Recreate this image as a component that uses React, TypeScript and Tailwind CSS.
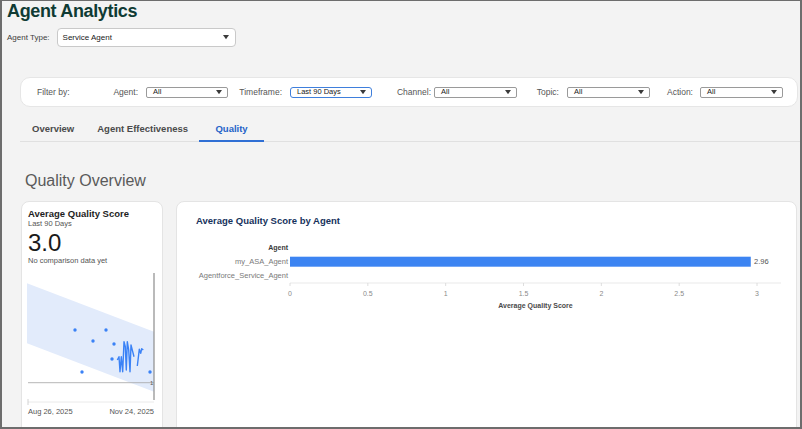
import React from 'react';

const FONT = { fontFamily: '"Liberation Sans", Arial, sans-serif' };

const Caret = ({ size = 5 }: { size?: number }) => (
  <svg width={size} height={size * 0.7} viewBox="0 0 10 7" className="shrink-0">
    <path d="M0 0 L10 0 L5 7 Z" fill="#3a3a3a" />
  </svg>
);

function FilterSelect({ value, width, active }: { value: string; width: string; active?: boolean }) {
  return (
    <div
      className={`${width} h-[11px] flex items-center justify-between bg-white pl-[6px] pr-[5px] ${
        active ? 'border-[1.5px] border-[#3f7fdc] rounded-[3px]' : 'border border-[#9a9a9a] rounded-[2px]'
      }`}
    >
      <span className="text-[7.5px] leading-none text-[#222]">{value}</span>
      <Caret size={6} />
    </div>
  );
}

const filters = [
  { label: 'Agent:', value: 'All', labelW: 'w-[38px]', gap: 'ml-[8px]', selW: 'w-[82px]' },
  { label: 'Timeframe:', value: 'Last 90 Days', labelW: 'w-[54px]', gap: 'ml-[8px]', selW: 'w-[82px]', active: true },
  { label: 'Channel:', value: 'All', labelW: 'w-[59px]', gap: 'ml-[3px]', selW: 'w-[83px]' },
  { label: 'Topic:', value: 'All', labelW: 'w-[42px]', gap: 'ml-[8px]', selW: 'w-[83px]' },
  { label: 'Action:', value: 'All', labelW: 'w-[43px]', gap: 'ml-[7px]', selW: 'w-[83px]' },
];

function Sparkline() {
  const dots = [
    [48, 60],
    [79, 60],
    [66, 71],
    [87, 74],
    [85, 89],
    [55, 102],
    [123, 102],
  ];
  return (
    <svg width="132" height="136" viewBox="0 0 132 136" className="-ml-[1px] mt-[4px] block">
      <polygon points="0,13.3 127,61.7 127,121.7 0,73.3" fill="#e2ebfb" />
      <line x1="1" y1="112.7" x2="127" y2="112.7" stroke="#a3a3a3" strokeWidth="0.8" />
      <line x1="127" y1="3" x2="127" y2="130" stroke="#8c8c8c" strokeWidth="1.2" />
      <line x1="1" y1="132" x2="127" y2="132" stroke="#e4e4e4" strokeWidth="0.8" />
      <line x1="1" y1="129" x2="1" y2="135" stroke="#c8c8c8" strokeWidth="0.8" />
      <text x="123" y="115" fontSize="6" fill="#555" style={FONT}>1</text>
      {dots.map(([x, y], i) => (
        <circle key={i} cx={x} cy={y} r="1.7" fill="#3b82f6" />
      ))}
      <polyline
        points="90.3,90 92,86.7 93,101.7 94.3,86.7 95.7,101.7 97,71.7 98.3,76.7 99.3,100 100.3,71.7 101.7,80 103,101.7 104,75 105.7,81.7 107,86.7"
        fill="none"
        stroke="#3b82f6"
        strokeWidth="1.4"
        strokeLinejoin="round"
      />
      <polyline
        points="110.3,96 112.3,79.3 113.7,83.3 114.7,78.7 116.3,80"
        fill="none"
        stroke="#3b82f6"
        strokeWidth="1.4"
        strokeLinejoin="round"
      />
    </svg>
  );
}

function BarChart() {
  const x0 = 94;
  const unit = 155.67;
  const ticks = ['0', '0.5', '1', '1.5', '2', '2.5', '3'];
  return (
    <svg width="596" height="74" viewBox="0 0 596 74" className="block mt-[13px]" style={FONT}>
      <text x="92" y="9.5" fontSize="7" fontWeight="700" fill="#3a3a3a" textAnchor="end">Agent</text>
      <text x="92" y="24" fontSize="7.5" fill="#7a7a7a" textAnchor="end">my_ASA_Agent</text>
      <text x="92" y="38" fontSize="7.5" fill="#7a7a7a" textAnchor="end">Agentforce_Service_Agent</text>
      <rect x={x0} y="16.7" width={2.96 * unit} height="10" fill="#3c84f2" />
      <text x="558" y="24" fontSize="7.5" fill="#555">2.96</text>
      <line x1={x0} y1="43" x2="585" y2="43" stroke="#e3e3e3" strokeWidth="0.8" />
      {ticks.map((t, i) => (
        <g key={t}>
          <line x1={x0 + (i * unit) / 2} y1="43" x2={x0 + (i * unit) / 2} y2="46" stroke="#d5d5d5" strokeWidth="0.8" />
          <text x={x0 + (i * unit) / 2} y="56" fontSize="7" fill="#8a8a8a" textAnchor="middle">{t}</text>
        </g>
      ))}
      <text x="339.5" y="68" fontSize="7" fontWeight="700" fill="#4a4a4a" textAnchor="middle">Average Quality Score</text>
    </svg>
  );
}

export default function App() {
  return (
    <div
      className="w-[802px] h-[429px] overflow-hidden bg-[#f3f3f3] border-t border-l-2 border-r-2 border-b-2 border-[#6d6d6d] flex flex-col"
      style={FONT}
    >
      {/* Header */}
      <div className="shrink-0 pl-[5px] text-[18px] leading-[20px] font-bold tracking-[-0.35px] text-[#0f3b34]">Agent Analytics</div>
      <div className="shrink-0 flex items-center mt-[7px] pl-[5px] h-[19px]">
        <span className="text-[8px] text-[#3e3e3c]">Agent Type:</span>
        <div className="ml-[7px] w-[179px] h-[19px] bg-white border border-[#c9c9c9] rounded-[4px] flex items-center justify-between pl-[5px] pr-[6px]">
          <span className="text-[8px] text-[#181818]">Service Agent</span>
          <Caret size={6} />
        </div>
      </div>

      {/* Filter bar */}
      <div className="shrink-0 ml-[18px] mr-[2px] mt-[30px] h-[30px] bg-white rounded-[10px] border border-[#e6e6e6] flex items-center pl-[16px]">
        <span className="w-[63px] text-[8.5px] text-[#555]">Filter by:</span>
        {filters.map((f) => (
          <div key={f.label} className="flex items-center">
            <span className={`${f.labelW} text-right text-[8.5px] text-[#555]`}>{f.label}</span>
            <div className={f.gap}>
              <FilterSelect value={f.value} width={f.selW} active={f.active} />
            </div>
          </div>
        ))}
      </div>

      {/* Tabs */}
      <div className="shrink-0 ml-[18px] mt-[11px] flex items-end border-b border-[#e0e0e0]">
        <div className="h-[23px] flex items-center pl-[12px] pr-[11px] text-[9.5px] font-bold text-[#4a4a4a]">Overview</div>
        <div className="h-[23px] flex items-center pl-[12px] pr-[11px] text-[9.5px] font-bold text-[#4a4a4a]">Agent Effectiveness</div>
        <div className="h-[24px] -mb-px w-[65px] flex items-center justify-center border-b-2 border-[#2f6fd4] text-[9.5px] font-bold text-[#2563c9]">Quality</div>
      </div>

      <div className="shrink-0 pl-[23px] mt-[29px] text-[16px] leading-[20px] text-[#5a5a5a]">Quality Overview</div>

      {/* Cards */}
      <div className="shrink-0 flex gap-[13px] ml-[19px] mt-[10px]">
        <div className="w-[142px] h-[240px] shrink-0 bg-white rounded-[8px] border border-[#e4e4e4] pl-[6px] pr-[7px] pt-[6px]">
          <div className="text-[9.5px] leading-[11px] font-bold text-[#1e1e1e]">Average Quality Score</div>
          <div className="text-[7.5px] leading-[10px] text-[#555]">Last 90 Days</div>
          <div className="mt-[1px] text-[24px] leading-[26px] text-[#1a1a1a]">3.0</div>
          <div className="text-[7.5px] leading-[10px] text-[#555]">No comparison data yet</div>
          <Sparkline />
          <div className="mt-[1px] flex justify-between text-[7.5px] leading-[10px] text-[#555] pr-[1px]">
            <span>Aug 26, 2025</span>
            <span>Nov 24, 2025</span>
          </div>
        </div>

        <div className="w-[621px] h-[240px] shrink-0 bg-white rounded-[8px] border border-[#e4e4e4] pl-[19px] pt-[13px]">
          <div className="text-[9.5px] leading-[12px] font-bold text-[#16325c]">Average Quality Score by Agent</div>
          <BarChart />
        </div>
      </div>
    </div>
  );
}
